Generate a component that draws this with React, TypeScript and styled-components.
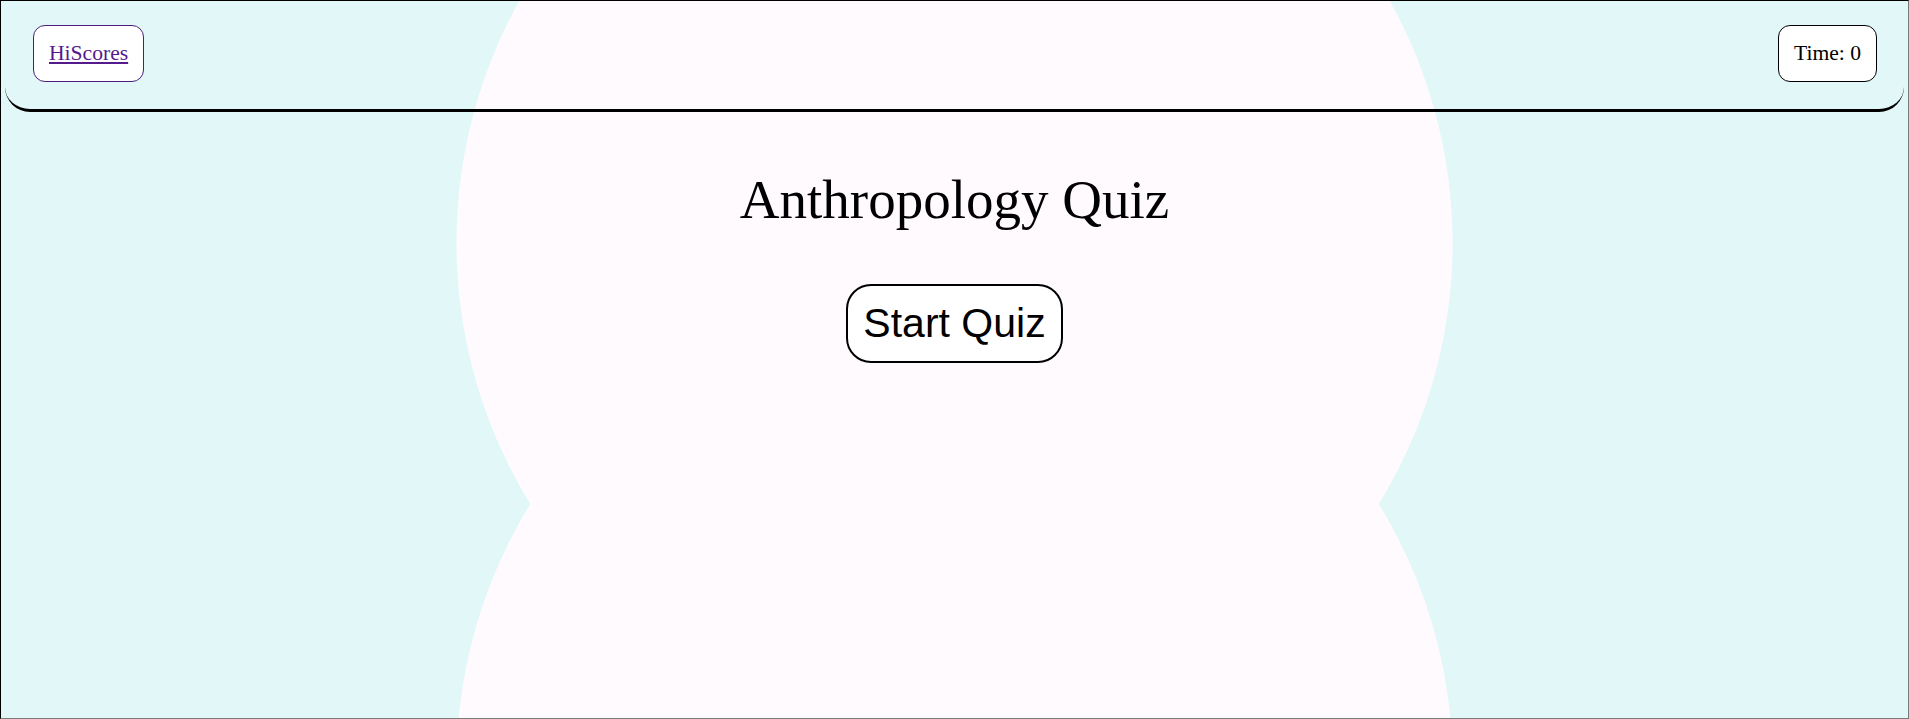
import React from "react";
import styled, { createGlobalStyle } from "styled-components";

const GlobalStyle = createGlobalStyle`
  html, body {
    margin: 0;
    padding: 0;
  }
  body {
    font-family: "Liberation Serif", "Times New Roman", serif;
    color: #000;
  }
  * {
    box-sizing: border-box;
  }
`;

const Page = styled.div`
  min-height: 100vh;
  border: 1px solid;
  border-color: #000 #7a7a7a #7a7a7a #000;
  background-color: #e2f8f8;
  background-image: radial-gradient(
    circle at 50% 50%,
    #fffafe 497.5px,
    #e2f8f8 498.5px
  );
  background-size: 100% 522px;
  background-position: 0 -19px;
  background-repeat: repeat-y;
`;

const Header = styled.header`
  margin: 0 4px;
  display: flex;
  justify-content: space-between;
  align-items: center;
  padding: 24px 27px 27px 28px;
  border-bottom: 3px solid #000;
  border-radius: 0 0 25px 25px;
`;

const Pill = styled.div<{ $tone?: string }>`
  display: inline-block;
  padding: 15px 15px;
  border: 1px solid currentColor;
  border-radius: 12px;
  background: #fff;
  font-size: 21.6px;
  color: ${(p) => p.$tone || "#000"};
`;

const PillLink = styled.a`
  color: #551a8b;
  text-decoration: underline;
`;

const Main = styled.main`
  display: flex;
  flex-direction: column;
  align-items: center;
`;

const Title = styled.h1`
  margin: 56px 0 0;
  font-size: 55px;
  font-weight: normal;
  line-height: normal;
`;

const StartButton = styled.button`
  margin-top: 53px;
  font-family: "Liberation Sans", Arial, sans-serif;
  font-size: 41px;
  color: #000;
  padding: 14px 15px;
  border: 2px solid #000;
  border-radius: 25px;
  background: #fff;
  cursor: pointer;
`;

export default function App() {
  return (
    <>
      <GlobalStyle />
      <Page>
        <Header>
          <Pill $tone="#4b1e7e">
            <PillLink href="#">HiScores</PillLink>
          </Pill>
          <Pill>Time: 0</Pill>
        </Header>
        <Main>
          <Title>Anthropology Quiz</Title>
          <StartButton type="button">Start Quiz</StartButton>
        </Main>
      </Page>
    </>
  );
}
